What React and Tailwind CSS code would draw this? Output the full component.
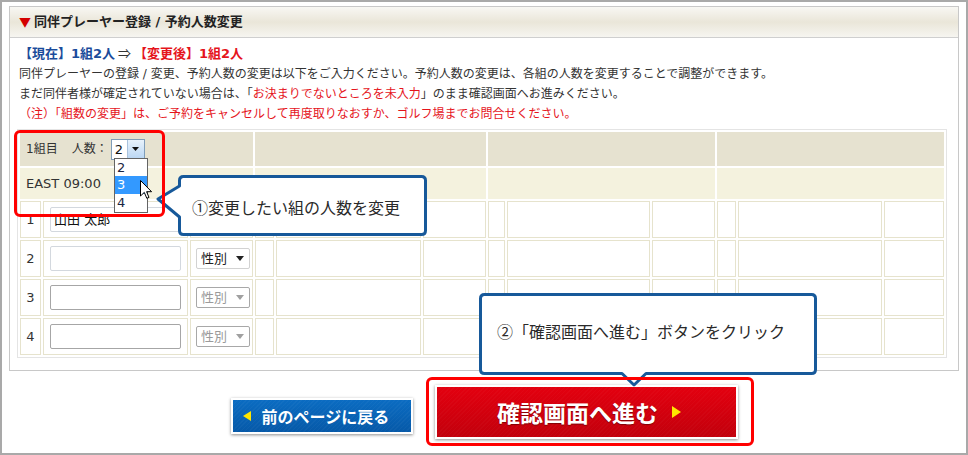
import React from "react";

const font = "font-['DejaVu_Sans','Noto_Sans_CJK_JP',sans-serif]";
const jp = "font-['Noto_Sans_CJK_JP','Noto_Sans',sans-serif]";

const groups = [0, 1, 2, 3];
const rows = [1, 2, 3, 4];

const GenderSelect = ({ disabled }) => (
  <div
    className={`flex items-center justify-between w-[54px] h-[21px] rounded-[2px] bg-white pl-[4px] pr-[5px] border ${
      disabled ? "border-[#a8a8a8] text-[#9a9a9a]" : "border-[#d2d2d2] text-[#222]"
    }`}
  >
    <span className="text-[13px] leading-none">性別</span>
    <svg width="8" height="5" viewBox="0 0 8 5">
      <path d="M0 0 H8 L4 5 Z" fill={disabled ? "#a0a0a0" : "#222"} />
    </svg>
  </div>
);

const NameInput = ({ value, light }) => (
  <div
    className={`flex items-center w-[131px] h-[25px] rounded-[2px] bg-white pl-[3px] text-[13px] text-[#111] border ${
      light ? "border-[#d3d8de]" : "border-[#a6a6a6]"
    }`}
  >
    {value}
  </div>
);

const BodyCell = ({ children, className = "" }) => (
  <div className={`border border-[#e6e3cd] bg-white flex items-center ${className}`}>
    {children}
  </div>
);

export default function App() {
  return (
    <div
      className={`relative w-[968px] h-[455px] overflow-hidden bg-white shadow-[inset_0_0_0_2px_#a9a9a9] ${font}`}
    >
      {/* panel */}
      <div className="ml-[9px] mt-[6px] w-[950px] h-[365px] border border-[#c8c8c8]">
        <div className="h-[31px] flex items-center pl-[9px] border-b border-[#cfcfcf] bg-[linear-gradient(#f8f7f3,#eae6d9_50%,#f6f5f0)]">
          <span className={`text-[#d40000] text-[12px] mr-[3px] ${jp}`}>▼</span>
          <span className="text-[13px] font-bold text-[#222]">
            同伴プレーヤー登録 / 予約人数変更
          </span>
        </div>

        <div className="pl-[9px] pt-[5px] text-[12px] leading-[20px] text-[#333] whitespace-nowrap">
          <p className="text-[13px] font-bold">
            <span className="text-[#1b4c9b]">【現在】1組2人</span>
            <span className={`text-[#333] font-normal ${jp}`}> ⇒ </span>
            <span className="text-[#e5141c]">【変更後】1組2人</span>
          </p>
          <p>
            同伴プレーヤーの登録 / 変更、予約人数の変更は以下をご入力ください。予約人数の変更は、各組の人数を変更することで調整ができます。
          </p>
          <p>
            まだ同伴者様が確定されていない場合は、「
            <span className="text-[#e5141c]">お決まりでないところを未入力</span>
            」のまま確認画面へお進みください。
          </p>
          <p className="text-[#e5141c]">
            （注）「組数の変更」は、ご予約をキャンセルして再度取りなおすか、ゴルフ場までお問合せください。
          </p>
        </div>

        {/* table */}
        <div className="ml-[7px] mt-[5px] w-[930px] border border-[#e4e4e4] p-[2px] grid grid-cols-[21px_145px_63px_19px_145px_63px_17px_143px_63px_19px_144px_60px] gap-[2px] text-[12px] text-[#333]">
          {groups.map((g) => (
            <div key={`h${g}`} className="col-span-3 h-[34px] bg-[#e6e2d0] flex items-center pl-[6px]">
              {g === 0 && (
                <>
                  <span>1組目</span>
                  <span className="ml-[14px]">人数：</span>
                  <div className="ml-[3px] flex w-[34px] h-[21px] border border-[#7f9db9] bg-white">
                    <span className="flex-1 pl-[3px] text-[13px] leading-[19px] text-[#111]">2</span>
                    <div className="w-[17px] flex items-center justify-center border-l border-[#a9c2dc] bg-[linear-gradient(#e8f2fc,#b9d6f3)]">
                      <svg width="7" height="4" viewBox="0 0 7 4">
                        <path d="M0 0 H7 L3.5 4 Z" fill="#111" />
                      </svg>
                    </div>
                  </div>
                </>
              )}
            </div>
          ))}
          {groups.map((g) => (
            <div key={`t${g}`} className="col-span-3 h-[31px] bg-[#f4f2de] flex items-center pl-[6px]">
              {g === 0 && <span className="text-[13px]">EAST 09:00</span>}
            </div>
          ))}
          {rows.map((r) =>
            groups.map((g) => (
              <React.Fragment key={`r${r}g${g}`}>
                <BodyCell className="h-[37px] justify-center">
                  {g === 0 && <span className="text-[13px]">{r}</span>}
                </BodyCell>
                <BodyCell className="h-[37px] pl-[6px]">
                  {g === 0 && <NameInput value={r === 1 ? "山田 太郎" : ""} light={r <= 2} />}
                </BodyCell>
                <BodyCell className="h-[37px] pl-[5px]">
                  {g === 0 && <GenderSelect disabled={r > 2} />}
                </BodyCell>
              </React.Fragment>
            ))
          )}
        </div>
      </div>

      {/* buttons */}
      <div className={`h-[82px] flex items-center justify-center gap-[22px] ${jp}`}>
        <div className="mt-[8px] p-[2px] bg-white shadow-[0_1px_3px_rgba(0,0,0,0.45)]">
          <div className="w-[178px] h-[32px] flex items-center pl-[10px] bg-[image:repeating-linear-gradient(135deg,rgba(255,255,255,0.03)_0px,rgba(255,255,255,0.03)_1px,transparent_1px,transparent_3px),linear-gradient(#0b6cc2,#0659a8)]">
            <svg width="8" height="10" viewBox="0 0 8 10" className="mr-[11px]">
              <path d="M8 0 V10 L0 5 Z" fill="#ffe600" />
            </svg>
            <span className="text-[16px] font-bold text-white">前のページに戻る</span>
          </div>
        </div>
        <div className="p-[2px] bg-white shadow-[0_1px_3px_rgba(0,0,0,0.45)]">
          <div className="w-[299px] h-[50px] flex items-center justify-center pl-[6px] bg-[image:repeating-linear-gradient(135deg,rgba(255,255,255,0.025)_0px,rgba(255,255,255,0.025)_1px,transparent_1px,transparent_3px),linear-gradient(#e3000f,#c2000c)]">
            <span className="text-[23px] font-bold text-white [text-shadow:0_1px_1px_rgba(80,0,0,0.6)]">
              確認画面へ進む
            </span>
            <svg width="9" height="12" viewBox="0 0 9 12" className="ml-[14px]">
              <path d="M0 0 V12 L9 6 Z" fill="#ffe600" />
            </svg>
          </div>
        </div>
      </div>

      {/* dropdown list */}
      <div className="absolute left-[114px] top-[158px] w-[34px] h-[55px] border border-[#646464] bg-white text-[13px] leading-[17px] text-[#1a2540]">
        <div className="pl-[2px] h-[17px]">2</div>
        <div className="pl-[2px] h-[18px] leading-[18px] bg-[#3399ff] text-white">3</div>
        <div className="pl-[2px] h-[18px] leading-[18px]">4</div>
      </div>

      {/* cursor */}
      <svg className="absolute left-[140px] top-[180px]" width="13" height="20" viewBox="0 0 13 20">
        <path d="M0.5 0.5 V16 L4.3 12.4 L6.8 18.3 L9 17.4 L6.6 11.7 H11.6 Z" fill="#fff" stroke="#000" strokeWidth="1" />
      </svg>

      {/* callout 1 */}
      <svg className="absolute left-[154px] top-[172px]" width="276" height="66" viewBox="154 172 276 66">
        <path
          d="M183.5 176.5 H421.5 Q425.5 176.5 425.5 180.5 V230.5 Q425.5 234.5 421.5 234.5 H183.5 Q179.5 234.5 179.5 230.5 V217 L158 199 L179.5 186 V180.5 Q179.5 176.5 183.5 176.5 Z"
          fill="#fff"
          stroke="#17599a"
          strokeWidth="3"
          strokeLinejoin="round"
        />
      </svg>
      <div className={`absolute left-[192px] top-[196px] text-[16px] leading-[22px] text-[#2a2a2a] whitespace-nowrap ${jp}`}>
        ①変更したい組の人数を変更
      </div>

      {/* red box 1 */}
      <div className="absolute left-[14px] top-[130px] w-[151px] h-[87px] border-[3px] border-[#ff0000] rounded-[6px]" />

      {/* callout 2 */}
      <svg className="absolute left-[476px] top-[290px]" width="344" height="97" viewBox="476 290 344 97">
        <path
          d="M484.5 294.5 H811.5 Q815.5 294.5 815.5 298.5 V369.5 Q815.5 373.5 811.5 373.5 H646 L634 385 L622 373.5 H484.5 Q480.5 373.5 480.5 369.5 V298.5 Q480.5 294.5 484.5 294.5 Z"
          fill="#fff"
          stroke="#17599a"
          strokeWidth="3"
          strokeLinejoin="round"
        />
      </svg>
      <div className={`absolute left-[497px] top-[320px] text-[16px] leading-[22px] text-[#2a2a2a] whitespace-nowrap ${jp}`}>
        ②「確認画面へ進む」ボタンをクリック
      </div>

      {/* red box 2 */}
      <div className="absolute left-[426px] top-[377px] w-[328px] h-[69px] border-[3px] border-[#ff0000] rounded-[6px]" />
    </div>
  );
}
